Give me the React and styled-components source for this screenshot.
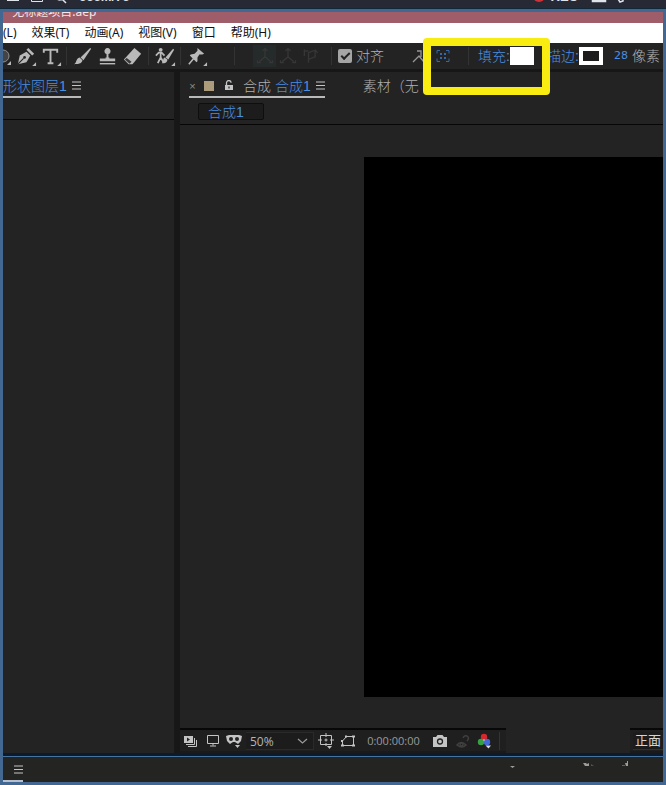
import React from 'react'
import styled, { createGlobalStyle } from 'styled-components'

const GlobalStyle = createGlobalStyle`
    *,
    *::before,
    *::after {
        box-sizing: border-box;
        margin: 0;
        padding: 0;
    }

    body {
        background: #232323;
        font-family: 'Liberation Sans', 'Noto Sans CJK SC', sans-serif;
        overflow: hidden;
    }

    button, input, select {
        font: inherit;
        color: inherit;
        background: none;
        border: 0;
        border-radius: 0;
        outline: 0;
    }
`

const Page = styled.div`
    min-height: 100vh;
    display: flex;
    flex-direction: column;
`

/* ---------- top strip ---------- */
const Strip = styled.header`
    height: 9px;
    padding: 0 8px 3px 7px;
    display: flex;
    align-items: flex-end;
    justify-content: space-between;
    overflow: hidden;
    background: #272a35;
    border-bottom: 1px solid #10283a;
    color: #dfe3ea;
`
const StripGroup = styled.div`
    display: flex;
    align-items: flex-end;
    gap: ${props => props.$gap}px;
    font-size: 13px;
    font-weight: 700;
    line-height: 16px;
    white-space: nowrap;

    svg {
        display: block;
    }
`

/* ---------- application window ---------- */
const Window = styled.div`
    flex: 1;
    display: flex;
    flex-direction: column;
    border: 3px solid #426790;
    overflow: hidden;
`
const TitleBar = styled.div`
    height: 11px;
    padding: 0 3px 5px;
    display: flex;
    align-items: flex-end;
    overflow: hidden;
    background: #9f5d69;
    color: #f6e6e8;
    font-size: 12px;
    line-height: 12px;
    font-family: 'Noto Sans', 'Noto Sans CJK SC', sans-serif;
    white-space: nowrap;
`
const MenuBar = styled.nav`
    height: 20px;
    display: flex;
    align-items: center;
    gap: 15px;
    background: #fff;
    color: #111;
    font-size: 12px;
    line-height: 20px;
    font-family: 'Noto Sans', 'Noto Sans CJK SC', sans-serif;
`
const MenuItem = styled.button`
    flex: none;
    white-space: nowrap;
`

/* ---------- toolbar ---------- */
const ToolBar = styled.div`
    height: 29px;
    display: flex;
    align-items: center;
    background: #232323;
    border-bottom: 3px solid #171717;
    color: #b0b0b0;
    font-size: 14px;
    font-weight: 300;
    line-height: 20px;
    white-space: nowrap;

    > * {
        flex: none;
    }
`
const Tool = styled.button`
    width: ${props => props.$width || 25}px;
    height: 22px;
    display: flex;
    align-items: center;
    justify-content: center;
    color: ${props => (props.$dim ? '#363636' : '#b9b9b9')};
    background: ${props => (props.$active ? '#252a2a' : 'none')};

    svg {
        display: block;
        flex: none;
    }
`
const Divider = styled.span`
    width: 1px;
    height: 18px;
    margin: 0 ${props => props.$after || 3}px 0 ${props => props.$before || 3}px;
    background: #333;
`
const SnapLabel = styled.label`
    display: flex;
    align-items: center;
    gap: 4px;
    margin-right: 26px;
`
const CheckBox = styled.input`
    appearance: none;
    width: 14px;
    height: 14px;
    border-radius: 2px;
    background: #a5a5a5;
    display: grid;
    place-items: center;

    &:checked::before {
        content: '';
        width: 9px;
        height: 5px;
        border: solid #222;
        border-width: 0 0 2px 2px;
        transform: rotate(-45deg) translate(1px, -1px);
    }
`
const Marked = styled.div`
    position: relative;
    display: flex;
    align-items: center;
    height: 26px;
    margin-left: 3px;
    padding: 0 8px 0 5px;
`
const Marker = styled.div`
    position: absolute;
    top: -5px;
    left: -8px;
    right: -8px;
    height: 57px;
    border: 8px solid #f8ec10;
    border-radius: 4px;
    pointer-events: none;
    z-index: 2;
`
const ColorField = styled.button`
    display: flex;
    align-items: center;
    color: #4a8ee0;
    margin-left: ${props => props.$left || 0}px;
    font-weight: 300;
`
const ColorName = styled.span`
    width: 32px;
    text-align: left;
`
const Swatch = styled.span`
    width: 24px;
    height: 18px;
    background: ${props => (props.$hollow ? '#1c1c1c' : '#fff')};
    border: ${props => (props.$hollow ? '4px solid #fff' : '0')};
`
const StrokeWidth = styled.input`
    width: 15px;
    margin: 0 3px 0 11px;
    color: #4a8ee0;
    font-family: 'DejaVu Sans', sans-serif;
    font-size: 11px;
    font-weight: 400;
`

/* ---------- docked panels ---------- */
const Workspace = styled.main`
    flex: 1;
    display: grid;
    grid-template-columns: 171px minmax(0, 1fr);
    gap: 6px;
    background: #171717;
`
const Panel = styled.section`
    display: flex;
    flex-direction: column;
    background: #232323;
    min-width: 0;
`
const Tabs = styled.div`
    height: 26px;
    display: flex;
    gap: 38px;
    padding-left: ${props => props.$left || 0}px;
    overflow: hidden;
    color: #b0b0b0;
    font-size: 14px;
    font-weight: 300;
    line-height: 20px;
    white-space: nowrap;
`
const Tab = styled.div`
    flex: none;
    display: flex;
    align-items: center;
    gap: 5px;
    padding-top: 3px;
    border-bottom: 2px solid ${props => (props.$open ? '#b9b9b9' : 'transparent')};

    svg {
        display: block;
    }
`
const TabName = styled.button`
    font-weight: 300;

    em {
        font-style: normal;
        color: #4a8ee0;
    }
`
const TabClose = styled.button`
    width: 7px;
    font-size: 11px;
    color: #8c8c8c;
`
const TabColor = styled.i`
    width: 10px;
    height: 10px;
    margin: 0 5px 0 3px;
    background: #ad9c7c;
`
const TabLock = styled.button`
    margin-right: 4px;
`
const SubBar = styled.div`
    height: ${props => props.$height}px;
    padding: 5px 0 0 18px;
    border-bottom: 1px solid #060606;
`
const Crumb = styled.button`
    display: block;
    width: 66px;
    height: 17px;
    padding: 0 9px;
    text-align: left;
    background: #1c1c1c;
    border: 1px solid #0e0e0e;
    border-radius: 2px;
    color: #4a8ee0;
    font-size: 14px;
    font-weight: 300;
    line-height: 14px;
    white-space: nowrap;
`
const Stage = styled.div`
    flex: 1;
    display: flex;
    padding: 32px 0 31px 184px;
`
const Canvas = styled.div`
    flex: 1;
    background: #000;
`
const ViewBar = styled.footer`
    height: 25px;
    display: flex;
    justify-content: space-between;
    font-family: 'Open Sans', 'Noto Sans CJK SC', sans-serif;
    font-size: 11px;
    line-height: 20px;
    color: #b5b5b5;
`
const ViewGroup = styled.div`
    display: flex;
    align-items: center;
    padding: ${props => props.$pad || 0};
    background: #1f1f1f;
    border-top: 2px solid #080808;
    border-bottom: 2px solid #1a1a1a;
`
const ZoomSelect = styled.select`
    appearance: none;
    width: 51px;
    height: 18px;
    padding-left: 4px;
    font-size: 12px;
`
const ZoomBox = styled.label`
    display: flex;
    align-items: center;
    width: 68px;
    height: 18px;
    margin: 0 1px;
    background: #1c1c1c;
    border: 1px solid #2a2a2a;
    border-left: 0;
`
const TimeCode = styled.button`
    width: 69px;
    color: #9a9a9a;
`
const ViewName = styled.button`
    width: 30px;
    height: 18px;
    font-size: 13px;
    line-height: 16px;
    background: #1c1c1c;
    border-bottom: 1px solid #303030;
    color: #d4d4d4;
    white-space: nowrap;
`

/* ---------- timeline ---------- */
const Timeline = styled.section`
    height: 29px;
    display: flex;
    justify-content: space-between;
    padding-right: 28px;
    background: #242422;
    border-top: 3px solid #0b1a2f;
    box-shadow: inset 0 1px 0 #47749f;
`
const TimelineTab = styled.button`
    width: 20px;
    padding-top: 3px;
    display: flex;
    align-items: center;
    justify-content: flex-end;
    border-bottom: 2px solid #b5bfd0;

    svg {
        display: block;
    }
`

/* ---------- icons ---------- */
const Corner = () => <path d="M23 22v-4l-4 4z" fill="currentColor" />

const Glyph = ({ children, size = 23 }) => (
    <svg width={size} height={size} viewBox="0 0 24 24" fill="none" stroke="none" aria-hidden="true">
        {children}
    </svg>
)

const Lines = () => (
    <svg width="9" height="9" viewBox="0 0 9 9" aria-hidden="true">
        <path d="M0 1h9M0 4.5h9M0 8h9" stroke="#c4c4c4" strokeWidth="1.1" />
    </svg>
)

const EllipseIcon = () => (
    <svg width="10" height="24" viewBox="0 0 10 24" aria-hidden="true">
        <circle cx="0" cy="12" r="6" fill="#444" stroke="#8f8f8f" />
        <path d="M8 21v-4l-4 4z" fill="#b9b9b9" />
    </svg>
)
const PenIcon = () => (
    <Glyph>
        <path d="M4 20l2-9 7-4 4 4-4 7z" fill="currentColor" />
        <path d="M13 5l2-2 6 6-2 2z" fill="currentColor" />
        <path d="M4 20l6-6" stroke="#232323" strokeWidth="1.2" />
        <circle cx="11" cy="13" r="1.4" fill="#232323" />
        <Corner />
    </Glyph>
)
const TypeIcon = () => (
    <Glyph>
        <path d="M5 8V5h14v3M12 5v14M9 19h6" stroke="currentColor" strokeWidth="2" />
        <Corner />
    </Glyph>
)
const BrushIcon = () => (
    <Glyph>
        <path d="M20 3l1 1-8 12-3-3z" fill="currentColor" />
        <path d="M9 13l3 3c-1 4-5 4-9 4 3-1 2-6 6-7z" fill="currentColor" />
    </Glyph>
)
const StampIcon = () => (
    <Glyph>
        <path d="M11 13V9.500a3.200 3.200 0 1 1 2 0V13h1v1h6v3H4v-3h6v-1z" fill="currentColor" />
        <path d="M4 19.5h16" stroke="currentColor" strokeWidth="1.500" />
    </Glyph>
)
const EraserIcon = () => (
    <Glyph>
        <path d="M14 3l7 6-9 11H8l-5-5z" fill="currentColor" />
        <path d="M6 13.500l5 4-2 2-5-4.500z" fill="#3a3a3a" />
    </Glyph>
)
const RotoIcon = () => (
    <Glyph>
        <circle cx="8" cy="5" r="2" fill="currentColor" />
        <path d="M8 7v6l-3 6M8 13l3 5M3 11l3-3h3l3 3" stroke="currentColor" strokeWidth="1.800" />
        <path d="M21 4l1 1-6 10-3-2z" fill="currentColor" />
        <path d="M12 13l3 2c0 3-2 4-6 4 2-1 1-5 3-6z" fill="currentColor" />
        <Corner />
    </Glyph>
)
const PinIcon = () => (
    <Glyph>
        <path d="M13 3l7 6-2 1-3 0-2 3 0 4-1 1-7-7 1-1 4-1 3-3z" fill="currentColor" />
        <path d="M9 14l-5 6" stroke="currentColor" strokeWidth="1.600" />
        <Corner />
    </Glyph>
)
const AxisIcon = () => (
    <Glyph size={20}>
        <path d="M12 4v9l-7 6M12 13l7 6M9 6l3-3 3 3M3 17v3h4M21 17v3h-4" stroke="currentColor" strokeWidth="1.600" />
    </Glyph>
)
const ViewAxisIcon = () => (
    <Glyph size={20}>
        <path d="M4 4v8M4 6h5M9 20V8l8-3v8l-8 3M17 5l3 3" stroke="currentColor" strokeWidth="1.600" />
    </Glyph>
)
const CaretIcon = () => (
    <svg width="16" height="16" viewBox="0 0 16 16" aria-hidden="true">
        <path d="M2 14l6-6 5 6M6 3h4v6" fill="none" stroke="#969696" strokeWidth="1.300" />
    </svg>
)
const SnapIcon = () => (
    <svg width="14" height="14" viewBox="0 0 14 14" fill="none" stroke="#3468a8" aria-hidden="true">
        <path d="M1 4.500V1.500h3M10 1.500h3v3M13 9.500v3h-3M4 12.500H1v-3" />
        <path d="M4 5h2M8 5h2M4 9h2M8 9h2" strokeWidth="2" />
    </svg>
)
const LockIcon = () => (
    <svg width="10" height="11" viewBox="0 0 10 11" fill="none" aria-hidden="true">
        <path d="M2.500 5V3a2.300 2.300 0 0 1 4.600-.2" stroke="#c4c4c4" strokeWidth="1.300" />
        <path d="M1 5h8v5H1z" fill="#c4c4c4" />
        <path d="M5 6.500v2" stroke="#222" strokeWidth="1.200" />
    </svg>
)
const StackIcon = () => (
    <svg width="16" height="16" viewBox="0 0 16 16" aria-hidden="true">
        <path d="M1 3h9v7H1z" fill="#c4c4c4" />
        <path d="M4 4.500v4l3-2z" fill="#222" />
        <path d="M3 11.500h8.500V5M5 13.500h8.500V7" fill="none" stroke="#c4c4c4" />
    </svg>
)
const MonitorIcon = () => (
    <svg width="14" height="14" viewBox="0 0 14 14" fill="none" stroke="#c4c4c4" aria-hidden="true">
        <path d="M1.500 1.500h11v8h-11zM7 9.500v2M4 12h6" />
    </svg>
)
const MaskIcon = () => (
    <svg width="16" height="16" viewBox="0 0 16 16" fill="none" aria-hidden="true">
        <path d="M0 3l3-1h10l3 1-1 5-3 3-3-2H7l-3 2-3-3z" fill="#c4c4c4" />
        <circle cx="5" cy="6" r="2" fill="#222" />
        <circle cx="11" cy="6" r="2" fill="#222" />
        <path d="M9 12h5l-2.500 3z" fill="#c4c4c4" />
    </svg>
)
const ChevronIcon = () => (
    <svg width="11" height="8" viewBox="0 0 11 8" fill="none" stroke="#9a9a9a" aria-hidden="true">
        <path d="M1 2l4.500 4L10 2" strokeWidth="1.200" />
    </svg>
)
const GridIcon = () => (
    <svg width="16" height="16" viewBox="0 0 16 16" fill="none" stroke="#c4c4c4" aria-hidden="true">
        <path d="M2.500 2.500h11v9h-11zM8 0v4M8 10v3M8 5.500v3M6.500 7h3M0 7h4M12 7h4" />
        <path d="M9 13h5l-2.500 3z" fill="#c4c4c4" stroke="none" />
    </svg>
)
const RegionIcon = () => (
    <svg width="16" height="16" viewBox="0 0 16 16" fill="none" stroke="#c4c4c4" aria-hidden="true">
        <path d="M2.500 12.500V8l4-4.500h7v9z" />
        <path d="M1 12.500h3M12 12.500h3M12 3.500h3M5 3.500h2M1 8h2" strokeWidth="2" />
    </svg>
)
const CameraIcon = () => (
    <svg width="16" height="14" viewBox="0 0 16 14" aria-hidden="true">
        <path d="M1 3h3l1.500-2h5L12 3h3v10H1z" fill="#c4c4c4" />
        <circle cx="8" cy="7.500" r="2.500" fill="none" stroke="#222" strokeWidth="1.300" />
    </svg>
)
const GhostShotIcon = () => (
    <svg width="16" height="14" viewBox="0 0 16 14" fill="none" stroke="#404040" strokeWidth="1.500" aria-hidden="true">
        <path d="M2 11q4-5 9 0q-4 4-9 0zM8 4q1-3 4-2q3 2 0 5" />
        <circle cx="6.500" cy="10.500" r="1.500" />
    </svg>
)
const ChannelsIcon = () => (
    <svg width="16" height="16" viewBox="0 0 16 16" aria-hidden="true">
        <circle cx="7" cy="4" r="3.200" fill="#d8272c" />
        <circle cx="4" cy="9" r="3.200" fill="#37a043" />
        <circle cx="10" cy="9" r="3.200" fill="#4468d8" />
        <path d="M6 6.500h2l-1 2z" fill="#dcdcdc" />
        <path d="M8.500 12.500h5.500l-2.500 3z" fill="#dcdcdc" />
    </svg>
)
const Specks = () => (
    <svg width="130" height="16" viewBox="0 0 130 16" fill="#9c9c98" aria-hidden="true">
        <path d="M5 10h5l-2.500 2z" />
        <path d="M78 7h3l1 1 2-1v3h-4z" />
        <path d="M86 8l3 2h-3z" opacity=".4" />
        <path d="M120 7h2V5h1v5h-2z" />
        <path d="M117 9h3v1h-3z" opacity=".5" />
    </svg>
)

const menus = ['(L)', '效果(T)', '动画(A)', '视图(V)', '窗口', '帮助(H)']

const TopStrip = () => (
    <Strip>
        <StripGroup $gap={12}>
            <svg width="12" height="6" viewBox="0 0 12 6" aria-hidden="true">
                <path d="M0 1.500h12" stroke="#dfe3ea" />
            </svg>
            <svg width="12" height="6" viewBox="0 0 12 6" aria-hidden="true">
                <path d="M.5 0v2.500h11V0" fill="none" stroke="#dfe3ea" />
            </svg>
            <svg width="12" height="6" viewBox="0 0 12 6" aria-hidden="true">
                <path d="M2 0q3 2 5 0l4 4" fill="none" stroke="#dfe3ea" strokeWidth="1.500" />
            </svg>
            <span>666M/76</span>
        </StripGroup>
        <StripGroup $gap={6}>
            <svg width="12" height="6" viewBox="0 0 12 6" aria-hidden="true">
                <circle cx="6" cy="-3" r="6" fill="#cf3337" />
            </svg>
            <span>REC</span>
            <svg width="74" height="6" viewBox="0 0 74 6" fill="none" stroke="#dfe3ea" aria-hidden="true">
                <path d="M9 0v2h12V0" strokeWidth="2.500" />
                <path d="M34 0l2 3 3-1V0" strokeWidth="1.500" />
                <path d="M64 1V0M72 1V0" strokeWidth="2" />
            </svg>
        </StripGroup>
    </Strip>
)

const Tools = () => (
    <ToolBar>
        <Tool $width={10} aria-label="椭圆工具"><EllipseIcon /></Tool>
        <Tool aria-label="钢笔工具"><PenIcon /></Tool>
        <Tool aria-label="文字工具"><TypeIcon /></Tool>
        <Divider />
        <Tool aria-label="画笔工具"><BrushIcon /></Tool>
        <Tool aria-label="仿制图章工具"><StampIcon /></Tool>
        <Tool aria-label="橡皮擦工具"><EraserIcon /></Tool>
        <Divider />
        <Tool aria-label="Roto 笔刷工具"><RotoIcon /></Tool>
        <Divider />
        <Tool aria-label="操控点工具"><PinIcon /></Tool>
        <Divider $before={25} $after={18} />
        <Tool $width={23} $dim $active aria-label="本地轴模式"><AxisIcon /></Tool>
        <Tool $width={23} $dim aria-label="世界轴模式"><AxisIcon /></Tool>
        <Tool $width={23} $dim aria-label="视图轴模式"><ViewAxisIcon /></Tool>
        <Divider $before={9} $after={6} />
        <SnapLabel>
            <CheckBox type="checkbox" defaultChecked />
            对齐
        </SnapLabel>
        <Tool $width={18} aria-label="对齐边缘"><CaretIcon /></Tool>
        <Marked>
            <Tool $width={14} aria-label="对齐选项"><SnapIcon /></Tool>
            <Divider $before={18} $after={9} />
            <ColorField>
                <ColorName>填充:</ColorName>
                <Swatch />
            </ColorField>
            <Marker />
        </Marked>
        <ColorField $left={5}>
            <ColorName>描边:</ColorName>
            <Swatch $hollow />
        </ColorField>
        <StrokeWidth id="stroke-width" defaultValue="28" />
        <label htmlFor="stroke-width">像素</label>
    </ToolBar>
)

const LayerPanel = () => (
    <Panel>
        <Tabs>
            <Tab $open>
                <TabName><em>形状图层1</em></TabName>
                <Lines />
            </Tab>
        </Tabs>
        <SubBar $height={22} />
    </Panel>
)

const CompPanel = () => (
    <Panel>
        <Tabs $left={9}>
            <Tab $open>
                <TabClose aria-label="关闭">×</TabClose>
                <TabColor />
                <TabLock aria-label="锁定"><LockIcon /></TabLock>
                <TabName>合成 <em>合成1</em></TabName>
                <Lines />
            </Tab>
            <Tab>
                <TabName>素材（无</TabName>
            </Tab>
        </Tabs>
        <SubBar $height={27}>
            <Crumb>合成1</Crumb>
        </SubBar>
        <Stage>
            <Canvas />
        </Stage>
        <ViewBar>
            <ViewGroup $pad="0 3px 0 0">
                <Tool $width={22} aria-label="始终预览此视图"><StackIcon /></Tool>
                <Tool $width={21} aria-label="主查看器"><MonitorIcon /></Tool>
                <Tool $width={22} aria-label="蒙版"><MaskIcon /></Tool>
                <ZoomBox>
                    <ZoomSelect aria-label="放大率">
                        <option>50%</option>
                    </ZoomSelect>
                    <ChevronIcon />
                </ZoomBox>
                <Tool $width={22} aria-label="网格"><GridIcon /></Tool>
                <Tool $width={22} aria-label="目标区域"><RegionIcon /></Tool>
                <TimeCode>0:00:00:00</TimeCode>
                <Tool $width={24} aria-label="拍摄快照"><CameraIcon /></Tool>
                <Tool $width={22} $dim aria-label="显示快照"><GhostShotIcon /></Tool>
                <Tool $width={22} aria-label="通道"><ChannelsIcon /></Tool>
                <Divider />
            </ViewGroup>
            <ViewGroup $pad="0 0 0 3px">
                <ViewName>正面</ViewName>
            </ViewGroup>
        </ViewBar>
    </Panel>
)

const App = () => {
    return (
        <>
            <GlobalStyle />
            <Page>
                <TopStrip />
                <Window>
                    <TitleBar>· 无标题项目.aep</TitleBar>
                    <MenuBar>
                        {menus.map(name => <MenuItem key={name}>{name}</MenuItem>)}
                    </MenuBar>
                    <Tools />
                    <Workspace>
                        <LayerPanel />
                        <CompPanel />
                    </Workspace>
                    <Timeline>
                        <TimelineTab aria-label="时间轴菜单"><Lines /></TimelineTab>
                        <Specks />
                    </Timeline>
                </Window>
            </Page>
        </>
    )
}

export default App
